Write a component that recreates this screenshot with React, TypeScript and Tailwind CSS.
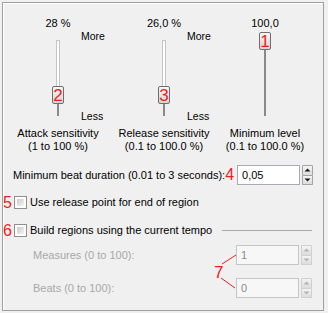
import React from "react";

const font = { fontFamily: '"Liberation Sans", Arial, sans-serif' };

function Red({ children, className = "" }: { children: React.ReactNode; className?: string }) {
  return (
    <span
      className={"text-[#f21c1c] leading-none " + className}
      style={{ fontFamily: '"Liberation Sans", Arial, sans-serif' }}
    >
      {children}
    </span>
  );
}

function Thumb({ top, num }: { top: number; num: string }) {
  return (
    <div
      className="absolute left-1/2 -translate-x-1/2 w-[12px] h-[18px] border border-[#6f6f6f] rounded-[2px] bg-gradient-to-b from-[#f6f6f6] to-[#d4d4d4] flex items-center justify-center"
      style={{ top }}
    >
      <Red className="text-[17px] font-normal mt-[1px]">{num}</Red>
    </div>
  );
}

function Slider({
  value,
  thumbTop,
  num,
  label,
  range,
  labels = true,
}: {
  value: string;
  thumbTop: number;
  num: string;
  label: string;
  range: string;
  labels?: boolean;
}) {
  return (
    <div className="flex flex-col items-center">
      <div className="h-[13px] leading-[13px]">{value}</div>
      <div className="relative w-full h-[89px]">
        {labels && (
          <>
            <div className="absolute left-[calc(50%+23px)] top-0 leading-[13px] text-[10.5px]">More</div>
            <div className="absolute left-[calc(50%+23px)] top-[80px] leading-[13px] text-[10.5px]">Less</div>
          </>
        )}
        <div className="absolute left-1/2 -translate-x-1/2 top-[10px] w-[4px] h-[76px] flex flex-col items-center">
          <div
            className="w-[4px] border-x border-t border-[#c4c4c4] bg-white"
            style={{ height: thumbTop - 10 + 2 }}
          />
          <div className="w-[2px] flex-1 bg-[#8a8a8a]" />
        </div>
        <Thumb top={thumbTop} num={num} />
      </div>
      <div className="mt-[8px] flex flex-col items-center leading-[13px] whitespace-nowrap">
        <div>{label}</div>
        <div>{range}</div>
      </div>
    </div>
  );
}

function Spinner({ disabled = false }: { disabled?: boolean }) {
  const arrow = disabled ? "#b4b4b4" : "#1a1a1a";
  const border = disabled ? "border-[#d0d0d0]" : "border-[#a4a4a4]";
  return (
    <div className="flex flex-col w-[11px] h-[20px] ml-[2px] shrink-0">
      <div
        className={
          "flex-1 border " + border + " rounded-t-[1px] bg-gradient-to-b from-[#f4f4f4] to-[#dcdcdc] flex items-center justify-center"
        }
      >
        <svg width="7" height="4" viewBox="0 0 7 4">
          <path d="M0.5 3.5 L3.5 0.5 L6.5 3.5 Z" fill={arrow} />
        </svg>
      </div>
      <div
        className={
          "flex-1 border-x border-b " + border + " rounded-b-[1px] bg-gradient-to-b from-[#f4f4f4] to-[#dcdcdc] flex items-center justify-center"
        }
      >
        <svg width="7" height="4" viewBox="0 0 7 4">
          <path d="M0.5 0.5 L3.5 3.5 L6.5 0.5 Z" fill={arrow} />
        </svg>
      </div>
    </div>
  );
}

function NumInput({ value, disabled = false }: { value: string; disabled?: boolean }) {
  return (
    <div className="flex items-center shrink-0">
      <div
        className={
          "w-[63px] h-[20px] border flex items-center pl-[4px] " +
          (disabled
            ? "border-[#c4c4c4] bg-[#f7f7f7] text-[#8a8a8a]"
            : "border-[#a9abb2] bg-white text-black")
        }
      >
        {value}
      </div>
      <Spinner disabled={disabled} />
    </div>
  );
}

function Checkbox() {
  return (
    <div className="w-[13px] h-[13px] shrink-0 border border-[#8e8f8f] bg-white p-[2px]">
      <div className="w-full h-full bg-gradient-to-br from-[#cbcbcb] to-[#f4f4f4]" />
    </div>
  );
}

export default function App() {
  return (
    <div
      className="w-[328px] h-[313px] bg-[#f0f0f0] pl-[2px] pt-[2px] text-[11px] text-black"
      style={font}
    >
      <div className="w-[322px] h-[309px] border border-[#a0a0a0] shadow-[inset_1px_1px_0_#ffffff] flex flex-col">
        {/* sliders */}
        <div className="grid grid-cols-[110px_102px_100px] pt-[14px]">
          <Slider value="28 %" thumbTop={56} num="2" label="Attack sensitivity" range="(1 to 100 %)" />
          <Slider value="26,0 %" thumbTop={56} num="3" label="Release sensitivity" range="(0.1 to 100.0 %)" />
          <Slider value="100,0" thumbTop={2} num="1" label="Minimum level" range="(0.1 to 100.0 %)" labels={false} />
        </div>

        {/* minimum beat duration */}
        <div className="flex items-center mt-[12px] pl-[10px] pr-[11px] h-[20px] whitespace-nowrap">
          <span>Minimum beat duration (0.01 to 3 seconds):</span>
          <div className="ml-auto flex items-center shrink-0">
            <Red className="text-[16px] mr-[3px]">4</Red>
            <NumInput value="0,05" />
          </div>
        </div>

        {/* checkbox 5 */}
        <div className="flex items-center mt-[11px] h-[13px] whitespace-nowrap">
          <Red className="text-[16px] w-[11px] shrink-0">5</Red>
          <Checkbox />
          <span className="ml-[3px]">Use release point for end of region</span>
        </div>

        {/* checkbox 6 */}
        <div className="flex items-center mt-[15px] h-[13px] pr-[11px] whitespace-nowrap">
          <Red className="text-[16px] w-[11px] shrink-0">6</Red>
          <Checkbox />
          <span className="ml-[3px]">Build regions using the current tempo</span>
          <div className="flex-1 ml-[10px] h-px bg-[#a8a8a8]" />
        </div>

        {/* measures / beats */}
        <div className="relative mt-[8px] pr-[11px] whitespace-nowrap">
          <div className="flex items-center h-[20px] pl-[30px] text-[#a8a8a8]">
            <span>Measures (0 to 100):</span>
            <div className="ml-auto">
              <NumInput value="1" disabled />
            </div>
          </div>
          <div className="flex items-center h-[20px] mt-[13px] pl-[30px] text-[#a8a8a8]">
            <span>Beats (0 to 100):</span>
            <div className="ml-auto">
              <NumInput value="0" disabled />
            </div>
          </div>
          <Red className="absolute left-[211px] top-[19px] text-[17px]">7</Red>
          <svg className="absolute left-[210px] top-[0px]" width="30" height="50" viewBox="0 0 30 50">
            <line x1="9" y1="19" x2="23" y2="10" stroke="#f21c1c" strokeWidth="1" />
            <line x1="8" y1="33" x2="22" y2="43" stroke="#f21c1c" strokeWidth="1" />
          </svg>
        </div>
      </div>
    </div>
  );
}
